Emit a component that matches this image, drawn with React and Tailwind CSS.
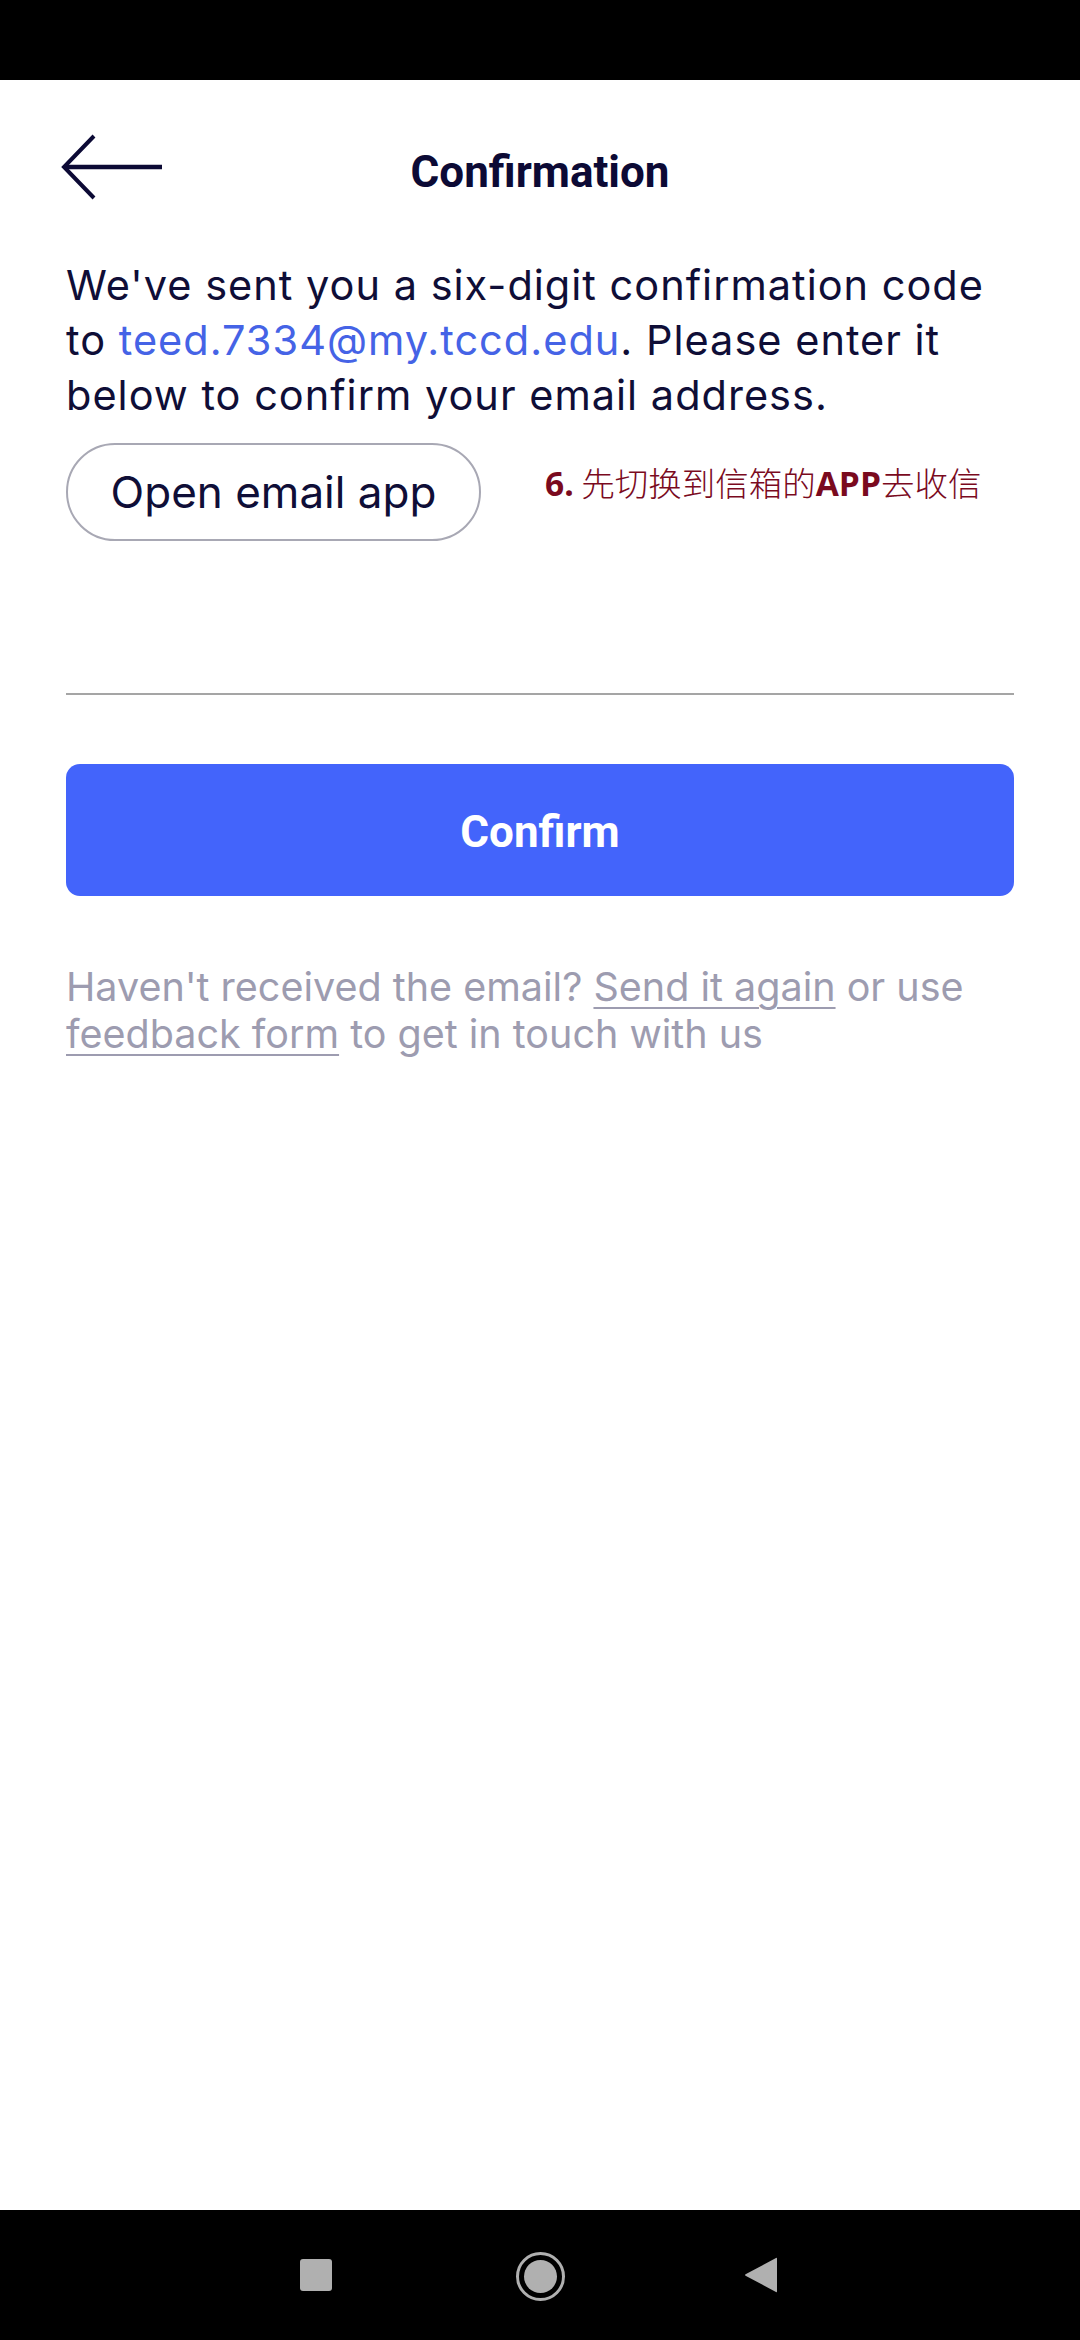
import React from "react";

export default function App() {
  return (
    <div className="w-[1080px] h-[2340px] bg-white flex flex-col overflow-hidden" style={{ fontFamily: "Inter, 'Noto Sans', sans-serif" }}>
      <div className="h-[80px] bg-black shrink-0" />
      <div className="h-[178px] shrink-0 relative flex items-center justify-center">
        <svg className="absolute left-[60px] top-[54px]" width="104" height="66" viewBox="0 0 104 66" fill="none">
          <path d="M34 2 L4 33 L34 64" stroke="#0c0a35" strokeWidth="4" strokeLinejoin="miter" strokeLinecap="butt" />
          <path d="M4 33 H102" stroke="#0c0a35" strokeWidth="4.5" />
        </svg>
        <div className="mt-[6px] text-[44px] font-bold text-[#0c0a35] leading-none" style={{ fontFamily: "Roboto, sans-serif" }}>Confirmation</div>
      </div>
      <div className="px-[66px] flex flex-col">
        <p className="text-[41.5px] leading-[55px] tracking-[1px] text-[#0f0e37]">
          We've sent you a six-digit confirmation code to <span className="text-[#4563e6]">teed.7334@my.tccd.edu</span>. Please enter it below to confirm your email address.
        </p>
        <div className="mt-[20px] flex items-center">
          <div className="h-[98px] w-[415px] rounded-full border-2 border-[#a8a8b4] flex items-center justify-center text-[44px] text-[#0f0e37]">
            Open email app
          </div>
          <div className="ml-[64px] -mt-[18px] text-[33.5px] text-[#7a0a1e]" style={{ fontFamily: "'Noto Sans CJK SC', sans-serif" }}>
            <span className="font-bold" style={{ fontFamily: "'Open Sans', sans-serif" }}>6.</span>{" "}
            <span className="font-light">先切换到信箱的</span>
            <span className="font-bold" style={{ fontFamily: "'Open Sans', sans-serif" }}>APP</span>
            <span className="font-light">去收信</span>
          </div>
        </div>
        <div className="h-[154px] border-b-2 border-[#a5a5a5]" />
        <div className="mt-[69px] h-[132px] pt-[4px] rounded-[14px] bg-[#4364fb] flex items-center justify-center text-white text-[44px] font-bold" style={{ fontFamily: "Roboto, sans-serif" }}>
          Confirm
        </div>
        <p className="mt-[68px] text-[39.5px] leading-[47px] text-[#9d9cb0]">
          Haven't received the email? <span className="underline decoration-2 underline-offset-[6px]">Send it again</span> or use <span className="underline decoration-2 underline-offset-[6px]">feedback form</span> to get in touch with us
        </p>
      </div>
      <div className="flex-1" />
      <div className="h-[130px] bg-black shrink-0 relative">
        <div className="absolute left-[300px] top-[49px] w-[32px] h-[32px] rounded-[3px] bg-[#b0b0b0]" />
        <div className="absolute left-[516px] top-[42px] w-[49px] h-[49px] rounded-full border-[3px] border-[#b0b0b0] flex items-center justify-center">
          <div className="w-[33px] h-[33px] rounded-full bg-[#b0b0b0]" />
        </div>
        <svg className="absolute left-[743px] top-[46px]" width="36" height="38" viewBox="0 0 36 38">
          <path d="M33 2 Q34 1 34 3 L34 35 Q34 37 33 36 L3 20 Q1 19 3 18 Z" fill="#b0b0b0" />
        </svg>
      </div>
    </div>
  );
}
